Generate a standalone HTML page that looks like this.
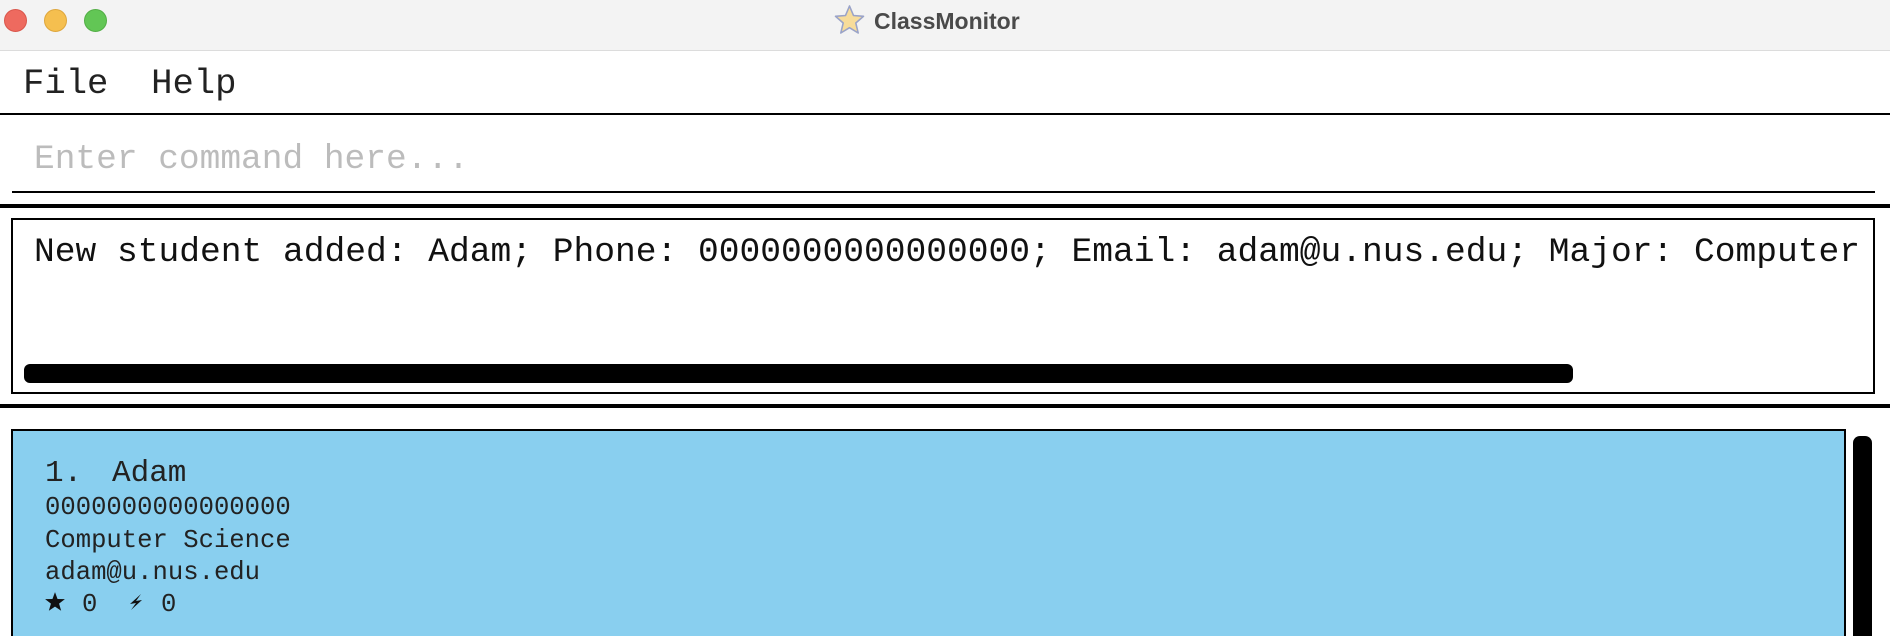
<!DOCTYPE html>
<html><head><meta charset="utf-8"><style>
*{margin:0;padding:0;box-sizing:border-box}
html,body{width:1890px;height:636px;overflow:hidden}
body{background:#fff;position:relative;font-family:"Liberation Mono",monospace;color:#222}
.a{position:absolute;white-space:pre}
.dot{position:absolute;top:9px;width:23px;height:23px;border-radius:50%}
</style></head><body>
<div class="a" style="left:0;top:0;width:1890px;height:51px;background:#f3f3f3;border-bottom:1px solid #dcdcdc"></div>
<div class="dot" style="left:4px;background:#ee6a5f;border:1px solid #d9564b"></div>
<div class="dot" style="left:44px;background:#f5bf4f;border:1px solid #dea63c"></div>
<div class="dot" style="left:84px;background:#62c655;border:1px solid #52ae45"></div>
<svg class="a" style="left:834px;top:4px" width="31" height="32" viewBox="0 0 31 32"><polygon points="15.5,2 19.5,11.5 29.5,12.3 21.8,19 24.2,29 15.5,23.7 6.8,29 9.2,19 1.5,12.3 11.5,11.5" fill="#f7dc9a" stroke="#9aa3c8" stroke-width="1.6" stroke-linejoin="round"/></svg>
<div class="a" style="left:874px;top:6px;font:bold 23px/30px 'Liberation Sans',sans-serif;color:#4a4a4a">ClassMonitor</div>

<div class="a" style="left:23px;top:66px;font-size:35.6px;line-height:35.6px;color:#222">File  Help</div>
<div class="a" style="left:0;top:113px;width:1890px;height:2px;background:#000"></div>

<div class="a" style="left:34px;top:143px;font-size:34.5px;line-height:34.5px;color:#bcbcbc">Enter command here...</div>
<div class="a" style="left:12px;top:191px;width:1863px;height:2px;background:#000"></div>
<div class="a" style="left:0;top:204px;width:1890px;height:4px;background:#000"></div>

<div class="a" style="left:11px;top:218px;width:1864px;height:176px;border:2px solid #000;overflow:hidden">
<div class="a" style="left:21px;top:16px;font-size:34.6px;line-height:34.6px;color:#111">New student added: Adam; Phone: 0000000000000000; Email: adam@u.nus.edu; Major: Computer Science</div>
<div class="a" style="left:11px;top:144px;width:1549px;height:19px;background:#000;border-radius:6px"></div>
</div>
<div class="a" style="left:0;top:404px;width:1890px;height:4px;background:#000"></div>

<div class="a" style="left:11px;top:429px;width:1835px;height:207px;background:#89cfef;border:2px solid #000;border-bottom:none"></div>
<div class="a" style="left:1853px;top:436px;width:19px;height:200px;background:#000;border-radius:7px 7px 0 0"></div>

<div class="a" style="left:45px;top:458px;font-size:31px;line-height:31px;color:#222">1.</div>
<div class="a" style="left:112px;top:458px;font-size:31px;line-height:31px;color:#222">Adam</div>
<div class="a" style="left:45px;top:495px;font-size:25.6px;line-height:25.6px;color:#222">0000000000000000</div>
<div class="a" style="left:45px;top:528px;font-size:25.6px;line-height:25.6px;color:#222">Computer Science</div>
<div class="a" style="left:45px;top:560px;font-size:25.6px;line-height:25.6px;color:#222">adam@u.nus.edu</div>
<svg class="a" style="left:44px;top:591px" width="22" height="22" viewBox="0 0 20 20"><polygon points="10,1 12.3,7.3 19,7.4 13.7,11.5 15.6,18 10,14.2 4.4,18 6.3,11.5 1,7.4 7.7,7.3" fill="#111"/></svg>
<div class="a" style="left:82px;top:592px;font-size:25.6px;line-height:25.6px;color:#222">0</div>
<svg class="a" style="left:127px;top:592px" width="18" height="20" viewBox="0 0 18 20"><path d="M14 2 L3 12 L9 11 L4 18 L15 8 L9 9 Z" fill="#111"/></svg>
<div class="a" style="left:161px;top:592px;font-size:25.6px;line-height:25.6px;color:#222">0</div>
</body></html>
